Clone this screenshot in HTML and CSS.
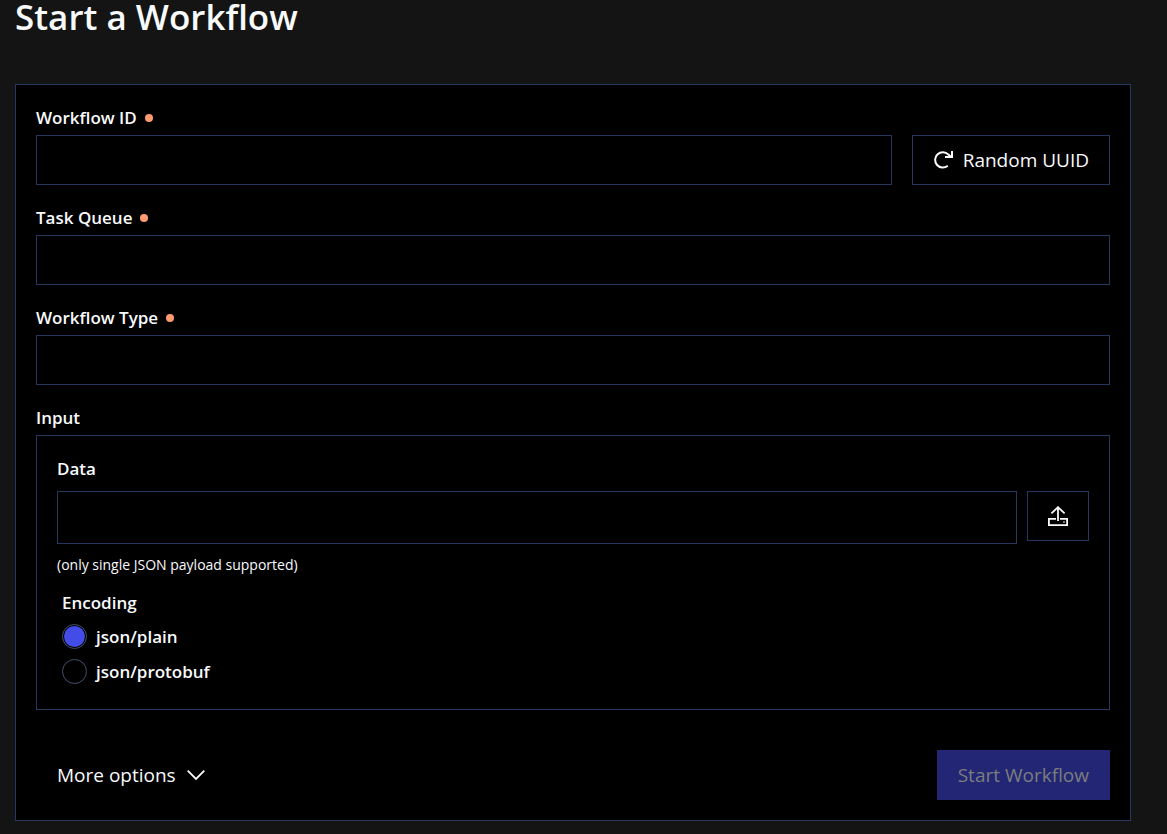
FILE: index.html
```html
<!DOCTYPE html>
<html lang="en">
<head>
<meta charset="utf-8">
<meta name="viewport" content="width=device-width, initial-scale=1">
<title>Start a Workflow</title>
<link rel="stylesheet" href="styles.css">
</head>
<body>
<main class="page">
  <h1 class="title">Start a Workflow</h1>
  <form class="card">
    <div class="field">
      <label class="label required" for="workflow-id">Workflow ID</label>
      <div class="id-row">
        <input class="input" id="workflow-id" type="text" required>
        <button class="button outlined" type="button">
          <svg class="icon" viewBox="0 0 20 20" aria-hidden="true"><path d="M14.8 15.8A7.7 7.7 0 1 1 15.4 4.6L17.6 6.6M19 1V7H12" fill="none" stroke="currentColor" stroke-width="2"/></svg>
          <span>Random UUID</span>
        </button>
      </div>
    </div>
    <div class="field">
      <label class="label required" for="task-queue">Task Queue</label>
      <input class="input" id="task-queue" type="text" required>
    </div>
    <div class="field">
      <label class="label required" for="workflow-type">Workflow Type</label>
      <input class="input" id="workflow-type" type="text" required>
    </div>
    <section class="field" aria-labelledby="input-heading">
      <h2 class="label" id="input-heading">Input</h2>
      <div class="panel">
        <label class="label" for="data">Data</label>
        <div class="data-row">
          <textarea class="input editor" id="data" rows="1"></textarea>
          <button class="button outlined upload" type="button" aria-label="Upload">
            <svg class="icon" viewBox="0 0 20 20" aria-hidden="true"><path d="M8 12.8H.9V19.1H19.1V12.8H12M10 15V1.5M3.4 7.4L10 1.2L16.6 7.4" fill="none" stroke="currentColor" stroke-width="1.8"/><path d="M15.2 15.2h1.6v1.6h-1.6z" fill="currentColor" opacity=".8"/></svg>
          </button>
        </div>
        <p class="hint">(only single JSON payload supported)</p>
        <fieldset class="encoding">
          <legend class="label">Encoding</legend>
          <label class="option label"><input class="radio" type="radio" name="encoding" checked><span>json/plain</span></label>
          <label class="option label"><input class="radio" type="radio" name="encoding"><span>json/protobuf</span></label>
        </fieldset>
      </div>
    </section>
    <div class="actions">
      <button class="button more" type="button">
        <span>More options</span>
        <svg class="icon" viewBox="0 0 20 20" aria-hidden="true"><path d="M1.7 5.7L10 14L18.3 5.7" fill="none" stroke="currentColor" stroke-width="1.8"/></svg>
      </button>
      <button class="button primary" type="submit" disabled>Start Workflow</button>
    </div>
  </form>
</main>
</body>
</html>
```
FILE: styles.css
```css
* {
  box-sizing: border-box;
}

body {
  margin: 0;
  background: #141414;
  color: #f8fafc;
  font-family: "Segoe UI", "Open Sans", "Noto Sans", sans-serif;
}

.page {
  padding: 0 36px 12px 15px;
}

.title {
  margin: 0 0 50px;
  font-size: 35px;
  line-height: 34px;
  font-weight: 600;
}

.card {
  display: flex;
  flex-direction: column;
  gap: 20px;
  padding: 20px;
  border: 1px solid #273860;
  background: #000;
}

.field {
  display: flex;
  flex-direction: column;
  gap: 5px;
}

.label {
  display: flex;
  align-items: center;
  margin: 0;
  padding: 0;
  font-size: 17px;
  line-height: 25px;
  font-weight: 600;
}

.required::after {
  content: "";
  width: 8px;
  height: 8px;
  margin-left: 8px;
  border-radius: 50%;
  background: #ff9b70;
}

.input {
  width: 100%;
  height: 50px;
  padding: 0 10px;
  border: 1px solid #273860;
  border-radius: 0;
  background: #000;
  color: inherit;
  font: inherit;
}

.id-row {
  display: flex;
  gap: 20px;
}

.id-row .input,
.data-row .input {
  flex: 1;
  min-width: 0;
}

.button {
  display: flex;
  align-items: center;
  justify-content: center;
  gap: 10px;
  height: 50px;
  padding: 0 20px;
  border: 1px solid transparent;
  background: none;
  color: inherit;
  font: inherit;
  font-size: 19px;
  line-height: 25px;
  white-space: nowrap;
}

.outlined {
  border-color: #273860;
}

.icon {
  width: 20px;
  height: 20px;
  flex: none;
}

.panel {
  display: flex;
  flex-direction: column;
  gap: 10px;
  padding: 20px;
  border: 1px solid #273860;
}

.data-row {
  display: flex;
  align-items: flex-start;
  gap: 10px;
}

.editor {
  height: 53px;
  padding: 12px 10px;
  resize: none;
}

.upload {
  width: 62px;
}

.hint {
  margin: 0;
  font-size: 14px;
  line-height: 22px;
}

.encoding {
  min-width: 0;
  margin: 0;
  padding: 5px;
  border: 0;
}

.encoding legend {
  padding: 4px 0;
}

.option {
  gap: 9px;
}

.option + .option {
  margin-top: 10px;
}

.radio {
  appearance: none;
  width: 25px;
  height: 25px;
  margin: 0;
  border: 1px solid #42506e;
  border-radius: 50%;
  background: #000;
}

.radio:checked {
  padding: 1px;
  background: #444ce7 content-box;
}

.actions {
  display: flex;
  justify-content: space-between;
  margin-top: 20px;
}

.primary {
  background: #222674;
  color: #7c7d7e;
}
```
